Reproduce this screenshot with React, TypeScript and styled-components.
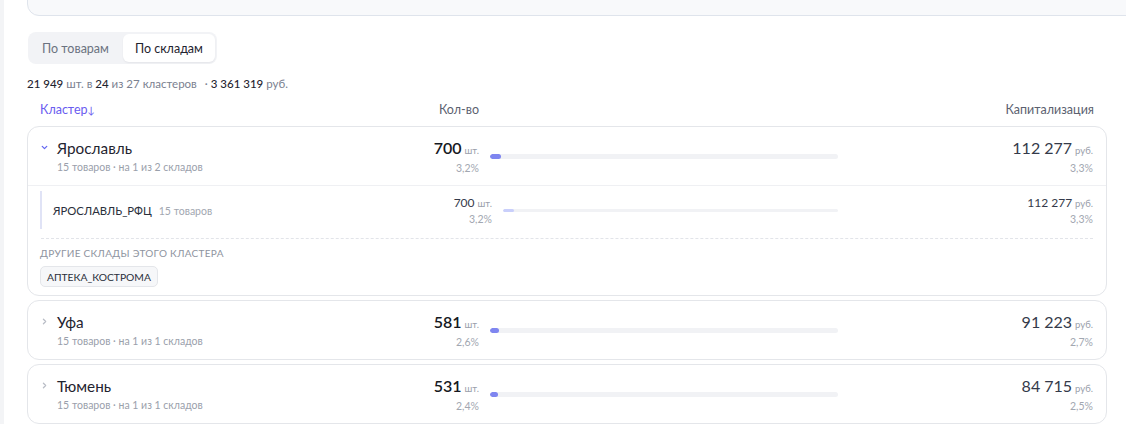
import React from "react";
import styled, { createGlobalStyle } from "styled-components";

const Global = createGlobalStyle`
  html, body { margin: 0; padding: 0; background: #fff; overflow: hidden; }
  body { font-family: Lato, "Noto Sans", sans-serif; color: #1f2430; }
  * { box-sizing: border-box; }
`;

const Page = styled.div`
  border-left: 4px solid #f3f4f6;
  min-height: 424px;
  padding: 0 19px 0 23px;
`;

const StatsCard = styled.div`
  margin-top: -34px;
  margin-right: -60px;
  height: 50px;
  background: #f8f9fb;
  border: 1px solid #dfe4ec;
  border-radius: 12px;
  position: relative;
`;

const StatValue = styled.span<{ $left: number }>`
  position: absolute;
  left: ${(p) => p.$left}px;
  bottom: 14px;
  font-size: 15px;
  font-weight: 700;
  color: #1f2430;
`;

const Tabs = styled.div`
  margin-top: 16px;
  margin-left: 1px;
  display: inline-flex;
  background: #f2f3f6;
  border-radius: 8px;
  padding: 2px;
  gap: 2px;
`;

const Tab = styled.button<{ $active?: boolean }>`
  font-family: inherit;
  border: none;
  cursor: pointer;
  height: 28px;
  padding: 0 12px;
  border-radius: 6px;
  font-size: 12.5px;
  background: ${(p) => (p.$active ? "#fff" : "transparent")};
  color: ${(p) => (p.$active ? "#1f2430" : "#6b7280")};
  box-shadow: ${(p) => (p.$active ? "0 1px 2px rgba(16,24,40,0.06)" : "none")};
`;

const Summary = styled.div`
  margin-top: 13px;
  font-size: 11.5px;
  color: #7b8190;
  line-height: 14px;
`;

const Strong = styled.span`
  color: #1f2430;
  font-weight: 500;
`;

const Sep = styled.span`
  margin-left: 8px;
`;

const Row = styled.div`
  display: grid;
  grid-template-columns: 359px 80px 1fr 255px;
  align-items: center;
`;

const HeadRow = styled(Row)`
  margin-top: 11px;
  padding: 0 13px;
  font-size: 12.5px;
  line-height: 16px;
  color: #5b6170;
`;

const SortHead = styled.span`
  color: #6a5cf0;
`;

const Arrow = styled.span`
  font-size: 10px;
`;

const RightHead = styled.span`
  text-align: right;
`;

const List = styled.div`
  margin-top: 8px;
  display: flex;
  flex-direction: column;
  gap: 4px;
`;

const Card = styled.div`
  border: 1px solid #e4e6ea;
  border-radius: 12px;
  background: #fff;
`;

const ClusterRow = styled(Row)`
  height: 58px;
  padding: 0 13px 0 12px;
`;

const NameCell = styled.div`
  display: grid;
  grid-template-columns: 17px 1fr;
  grid-template-rows: auto auto;
  row-gap: 4px;
`;

const Chevron = styled.svg<{ $open?: boolean }>`
  width: 9px;
  height: 9px;
  align-self: center;
  color: ${(p) => (p.$open ? "#6366f1" : "#b9bdc6")};
`;

const ClusterName = styled.span`
  font-size: 15.3px;
  line-height: 18px;
  color: #1f2430;
`;

const Meta = styled.span`
  grid-column: 2;
  font-size: 10.5px;
  line-height: 13px;
  color: #9aa0ab;
`;

const NumCell = styled.div`
  text-align: right;
  display: flex;
  flex-direction: column;
  align-items: flex-end;
  gap: 2px;
`;

const Amount = styled.span<{ $small?: boolean; $bold?: boolean }>`
  font-size: ${(p) => (p.$small ? 12 : 16)}px;
  line-height: ${(p) => (p.$small ? 15 : 19)}px;
  font-weight: ${(p) => (p.$bold ? 600 : 400)};
  color: ${(p) => (p.$bold ? "#151922" : "#343a4a")};
`;

const Unit = styled.span`
  font-size: 9.5px;
  color: #9aa0ab;
  margin-left: 3px;
  font-weight: 400;
`;

const Pct = styled.span`
  font-size: 10.5px;
  line-height: 13px;
  color: #a2a7b1;
`;

const BarCell = styled.div`
  padding-left: 11px;
`;

const Track = styled.div<{ $thin?: boolean }>`
  height: ${(p) => (p.$thin ? 3 : 5)}px;
  border-radius: 3px;
  background: #f1f2f5;
  overflow: hidden;
`;

const Fill = styled.div<{ $thin?: boolean }>`
  height: 100%;
  border-radius: 3px;
  background: ${(p) => (p.$thin ? "#c9cffb" : "#7f86f0")};
`;

const Expanded = styled.div`
  border-top: 1px solid #eff0f3;
  padding: 5px 13px 8px 12px;
`;

const WarehouseRow = styled(Row)`
  height: 38px;
  border-left: 2px solid #e0e3f6;
  padding-left: 11px;
`;

const WarehouseName = styled.div`
  font-size: 11.3px;
  color: #2a2f3b;
  display: flex;
  align-items: baseline;
  gap: 7px;
`;

const WarehouseMeta = styled.span`
  font-size: 10.5px;
  color: #a2a7b1;
`;

const Dashed = styled.div`
  margin: 9px 0 0 1px;
  border-top: 1px dashed #e2e4e9;
`;

const OtherLabel = styled.div`
  margin-top: 7px;
  font-size: 10px;
  line-height: 14px;
  letter-spacing: 0.3px;
  color: #8e94a0;
  text-transform: uppercase;
`;

const Chips = styled.div`
  margin-top: 6px;
  display: flex;
  gap: 6px;
`;

const Chip = styled.span`
  display: inline-flex;
  align-items: center;
  height: 21px;
  padding: 0 6px;
  border: 1px solid #e4e6ea;
  border-radius: 5px;
  background: #f6f7f9;
  font-size: 10.3px;
  color: #2a2f3b;
`;

type Cluster = {
  name: string;
  goods: number;
  on: number;
  of: number;
  qty: number;
  qtyPct: string;
  cap: string;
  capPct: string;
  share: number;
  open?: boolean;
};

const clusters: Cluster[] = [
  { name: "Ярославль", goods: 15, on: 1, of: 2, qty: 700, qtyPct: "3,2%", cap: "112 277", capPct: "3,3%", share: 3.2, open: true },
  { name: "Уфа", goods: 15, on: 1, of: 1, qty: 581, qtyPct: "2,6%", cap: "91 223", capPct: "2,7%", share: 2.6 },
  { name: "Тюмень", goods: 15, on: 1, of: 1, qty: 531, qtyPct: "2,4%", cap: "84 715", capPct: "2,5%", share: 2.4 },
];

const ChevronIcon = ({ open }: { open?: boolean }) => (
  <Chevron $open={open} viewBox="0 0 10 10" fill="none" stroke="currentColor" strokeWidth="1.4" strokeLinecap="round" strokeLinejoin="round">
    {open ? <path d="M2.5 3.8 5 6.3 7.5 3.8" /> : <path d="M3.8 2.5 6.3 5 3.8 7.5" />}
  </Chevron>
);

export default function App() {
  return (
    <>
      <Global />
      <Page>
        <StatsCard>
          <StatValue $left={153}>11</StatValue>
          <StatValue $left={345}>3 155 ₽</StatValue>
          <StatValue $left={470}>456</StatValue>
        </StatsCard>

        <Tabs>
          <Tab>По товарам</Tab>
          <Tab $active>По складам</Tab>
        </Tabs>

        <Summary>
          <Strong>21 949</Strong> шт. в <Strong>24</Strong> из 27 кластеров
          <Sep>·</Sep> <Strong>3 361 319</Strong> руб.
        </Summary>

        <HeadRow>
          <SortHead>
            Кластер<Arrow>↓</Arrow>
          </SortHead>
          <RightHead>Кол-во</RightHead>
          <span />
          <RightHead>Капитализация</RightHead>
        </HeadRow>

        <List>
          {clusters.map((c) => (
            <Card key={c.name}>
              <ClusterRow>
                <NameCell>
                  <ChevronIcon open={c.open} />
                  <ClusterName>{c.name}</ClusterName>
                  <Meta>
                    {c.goods} товаров · на {c.on} из {c.of} складов
                  </Meta>
                </NameCell>
                <NumCell>
                  <Amount $bold>
                    {c.qty}
                    <Unit>шт.</Unit>
                  </Amount>
                  <Pct>{c.qtyPct}</Pct>
                </NumCell>
                <BarCell>
                  <Track>
                    <Fill style={{ width: `${c.share}%` }} />
                  </Track>
                </BarCell>
                <NumCell>
                  <Amount>
                    {c.cap}
                    <Unit>руб.</Unit>
                  </Amount>
                  <Pct>{c.capPct}</Pct>
                </NumCell>
              </ClusterRow>

              {c.open && (
                <Expanded>
                  <WarehouseRow>
                    <WarehouseName>
                      ЯРОСЛАВЛЬ_РФЦ
                      <WarehouseMeta>15 товаров</WarehouseMeta>
                    </WarehouseName>
                    <NumCell>
                      <Amount $small>
                        700
                        <Unit>шт.</Unit>
                      </Amount>
                      <Pct>3,2%</Pct>
                    </NumCell>
                    <BarCell>
                      <Track $thin>
                        <Fill $thin style={{ width: "3.2%" }} />
                      </Track>
                    </BarCell>
                    <NumCell>
                      <Amount $small>
                        112 277
                        <Unit>руб.</Unit>
                      </Amount>
                      <Pct>3,3%</Pct>
                    </NumCell>
                  </WarehouseRow>
                  <Dashed />
                  <OtherLabel>Другие склады этого кластера</OtherLabel>
                  <Chips>
                    <Chip>АПТЕКА_КОСТРОМА</Chip>
                  </Chips>
                </Expanded>
              )}
            </Card>
          ))}
        </List>
      </Page>
    </>
  );
}
